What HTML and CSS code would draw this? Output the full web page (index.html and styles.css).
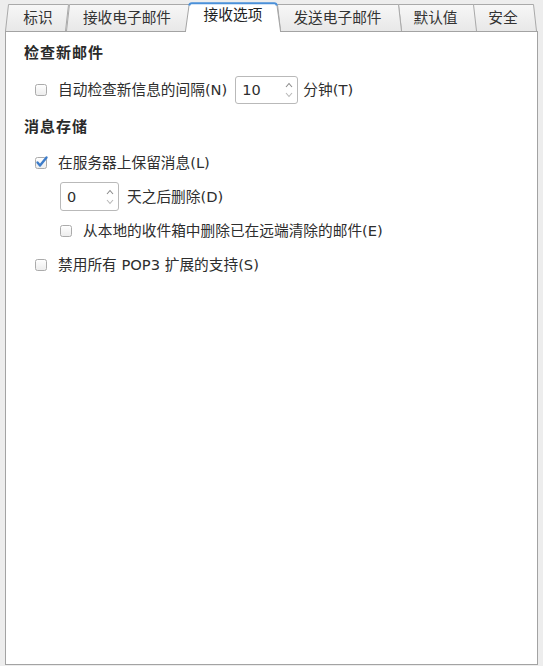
FILE: index.html
```html
<!DOCTYPE html>
<html lang="zh-CN">
<head>
<meta charset="utf-8">
<title>接收选项</title>
<link rel="stylesheet" href="styles.css">
</head>
<body>
<svg class="defs" width="0" height="0" aria-hidden="true">
  <defs>
    <linearGradient id="tabfill" x1="0" y1="0" x2="0" y2="1">
      <stop offset="0" stop-color="#f7f7f7"/>
      <stop offset="1" stop-color="#e8e8e8"/>
    </linearGradient>
    <linearGradient id="boxfill" x1="0" y1="0" x2="0" y2="1">
      <stop offset="0" stop-color="#ffffff"/>
      <stop offset="1" stop-color="#ececec"/>
    </linearGradient>
  </defs>
</svg>

<div class="tabbar">
  <div class="tab t1">
    <svg class="tabshape" width="64" height="27" viewBox="0 0 64 27"><path d="M0.5,27 L3.5,0.5 L63.5,0.5 L60.5,27" class="tabpath"/></svg>
    <span class="tablabel">标识</span>
  </div>
  <div class="tab t2">
    <svg class="tabshape" width="125" height="27" viewBox="0 0 125 27"><path d="M0.5,27 L3.5,0.5 L124.5,0.5 L121.5,27" class="tabpath"/></svg>
    <span class="tablabel">接收电子邮件</span>
  </div>
  <div class="tab t3 active">
    <svg class="tabshape" width="96" height="30" viewBox="0 0 96 30"><path d="M0.5,30 L0.5,29 L4,3.5 Q4.4,1.5 6.5,1.5 L89.5,1.5 Q91.6,1.5 92,3.5 L95.5,29 L95.5,30" class="activepath"/><path d="M4.2,3.5 Q4.6,1.3 6.8,1.3 L89.2,1.3 Q91.4,1.3 91.8,3.5" class="activetop"/></svg>
    <span class="tablabel">接收选项</span>
  </div>
  <div class="tab t4">
    <svg class="tabshape" width="125" height="27" viewBox="0 0 125 27"><path d="M3.5,27 L0.5,0.5 L121.5,0.5 L124.5,27" class="tabpath"/></svg>
    <span class="tablabel">发送电子邮件</span>
  </div>
  <div class="tab t5">
    <svg class="tabshape" width="79" height="27" viewBox="0 0 79 27"><path d="M3.5,27 L0.5,0.5 L75.5,0.5 L78.5,27" class="tabpath"/></svg>
    <span class="tablabel">默认值</span>
  </div>
  <div class="tab t6">
    <svg class="tabshape" width="65" height="27" viewBox="0 0 65 27"><path d="M3.5,27 L0.5,0.5 L61.5,0.5 L64.5,27" class="tabpath"/></svg>
    <span class="tablabel">安全</span>
  </div>
</div>

<div class="panel">
  <div class="heading h1">检查新邮件</div>

  <div class="row r1">
    <svg class="check" width="12" height="12" viewBox="0 0 12 12"><rect x="0.5" y="0.5" width="11" height="11" rx="2" class="boxrect"/></svg>
    <span class="label">自动检查新信息的间隔(N)</span>
    <div class="spin s1">
      <span class="spinval">10</span>
      <svg class="arrows" width="8" height="16" viewBox="0 0 8 16"><path d="M1,5 L4,1.5 L7,5" class="up"/><path d="M1,11 L4,14.5 L7,11" class="down"/></svg>
    </div>
    <span class="label after">分钟(T)</span>
  </div>

  <div class="heading h2">消息存储</div>

  <div class="row r2">
    <svg class="check" width="12" height="12" viewBox="0 0 12 12" overflow="visible"><rect x="0.5" y="0.5" width="11" height="11" rx="2" class="boxrect"/><path d="M2.5,5.5 L5,8.5 L11.5,0.5" class="tick"/></svg>
    <span class="label">在服务器上保留消息(L)</span>
  </div>

  <div class="row r3">
    <div class="spin s2">
      <span class="spinval">0</span>
      <svg class="arrows" width="8" height="16" viewBox="0 0 8 16"><path d="M1,5 L4,1.5 L7,5" class="up"/><path d="M1,11 L4,14.5 L7,11" class="down"/></svg>
    </div>
    <span class="label after2">天之后删除(D)</span>
  </div>

  <div class="row r4">
    <svg class="check" width="12" height="12" viewBox="0 0 12 12"><rect x="0.5" y="0.5" width="11" height="11" rx="2" class="boxrect"/></svg>
    <span class="label">从本地的收件箱中删除已在远端清除的邮件(E)</span>
  </div>

  <div class="row r5">
    <svg class="check" width="12" height="12" viewBox="0 0 12 12"><rect x="0.5" y="0.5" width="11" height="11" rx="2" class="boxrect"/></svg>
    <span class="label">禁用所有 POP3 扩展的支持(S)</span>
  </div>
</div>
</body>
</html>
```

FILE: styles.css
```css
html, body {
  margin: 0;
  padding: 0;
}
body {
  background: #ededed;
  width: 543px;
  height: 666px;
  overflow: hidden;
  font-family: "DejaVu Sans", "Noto Sans CJK SC", sans-serif;
  font-size: 14.7px;
  color: #2e2e2e;
}
.defs {
  position: absolute;
  width: 0;
  height: 0;
}

/* ---------- tabs ---------- */
.tabbar {
  display: flex;
  align-items: flex-end;
  height: 31px;
  padding-left: 5px;
  position: relative;
  z-index: 2;
}
.tab {
  position: relative;
  height: 27px;
  display: flex;
  align-items: center;
  justify-content: center;
  color: #333;
  line-height: 1;
}
.tabshape {
  position: absolute;
  left: 0;
  top: 0;
}
.tablabel {
  position: relative;
  padding-top: 1px;
}
.tabpath {
  fill: url(#tabfill);
  stroke: #a9a9a9;
  stroke-width: 1;
}
.activepath {
  fill: #ffffff;
  stroke: #a4a4a4;
  stroke-width: 1;
}
.activetop {
  fill: none;
  stroke: #4a90d9;
  stroke-width: 2;
}
.t1 { width: 64px; z-index: 2; }
.t2 { width: 125px; margin-left: -3px; z-index: 3; }
.t3 { width: 96px; height: 30px; margin-left: -6px; margin-bottom: -1px; z-index: 9; color: #222; }
.t3 .tablabel { padding-top: 0; padding-bottom: 4px; }
.t4 { width: 125px; margin-left: -4px; z-index: 5; }
.t5 { width: 79px; margin-left: -4px; z-index: 4; }
.t6 { width: 65px; margin-left: -5px; z-index: 3; }
.t1 .tablabel { margin-left: 2px; }
.t2 .tablabel { margin-left: -3px; }
.t4 .tablabel { margin-left: -4px; }
.t5 .tablabel { margin-left: -4px; }
.t6 .tablabel { margin-left: -3px; }

/* ---------- panel ---------- */
.panel {
  position: relative;
  z-index: 1;
  box-sizing: border-box;
  width: 533px;
  height: 634px;
  margin-left: 5px;
  background: #ffffff;
  border: 1px solid #a3a3a3;
  padding: 11px 0 0 18px;
}
.heading {
  font-weight: bold;
  font-size: 15px;
  letter-spacing: 1px;
  line-height: 20px;
  height: 20px;
  color: #2a2a2a;
}
.h2 { margin-top: 13px; }

.row {
  display: flex;
  align-items: center;
}
.label {
  line-height: 20px;
  white-space: nowrap;
}
.check {
  flex: none;
  margin-right: 11px;
}
.boxrect {
  fill: url(#boxfill);
  stroke: #ababab;
  stroke-width: 1;
}
.tick {
  fill: none;
  stroke: #3d7cc9;
  stroke-width: 2.4;
  stroke-linecap: round;
  stroke-linejoin: round;
}

.r1 { margin-top: 13px; margin-left: 11px; height: 28px; }
.r2 { margin-top: 16px; margin-left: 11px; height: 20px; }
.r3 { margin-top: 9px; margin-left: 36px; height: 29px; }
.r4 { margin-top: 10px; margin-left: 36px; height: 20px; }
.r5 { margin-top: 14px; margin-left: 11px; height: 20px; }

.spin {
  box-sizing: border-box;
  height: 28px;
  border: 1px solid #b9b9b9;
  border-radius: 3px;
  background: #ffffff;
  display: flex;
  align-items: center;
  justify-content: space-between;
  padding: 0 4px 0 6px;
  margin-left: 8px;
  font-size: 14.5px;
  color: #2e2e2e;
}
.s1 { width: 63px; }
.s2 { width: 59px; height: 29px; margin-left: 0; }
.spinval { line-height: 20px; }
.arrows { flex: none; }
.up {
  fill: none;
  stroke: #8a8a8a;
  stroke-width: 1.1;
}
.down {
  fill: none;
  stroke: #b8b8b8;
  stroke-width: 1.1;
}
.after { margin-left: 5px; }
.after2 { margin-left: 8px; }
```
